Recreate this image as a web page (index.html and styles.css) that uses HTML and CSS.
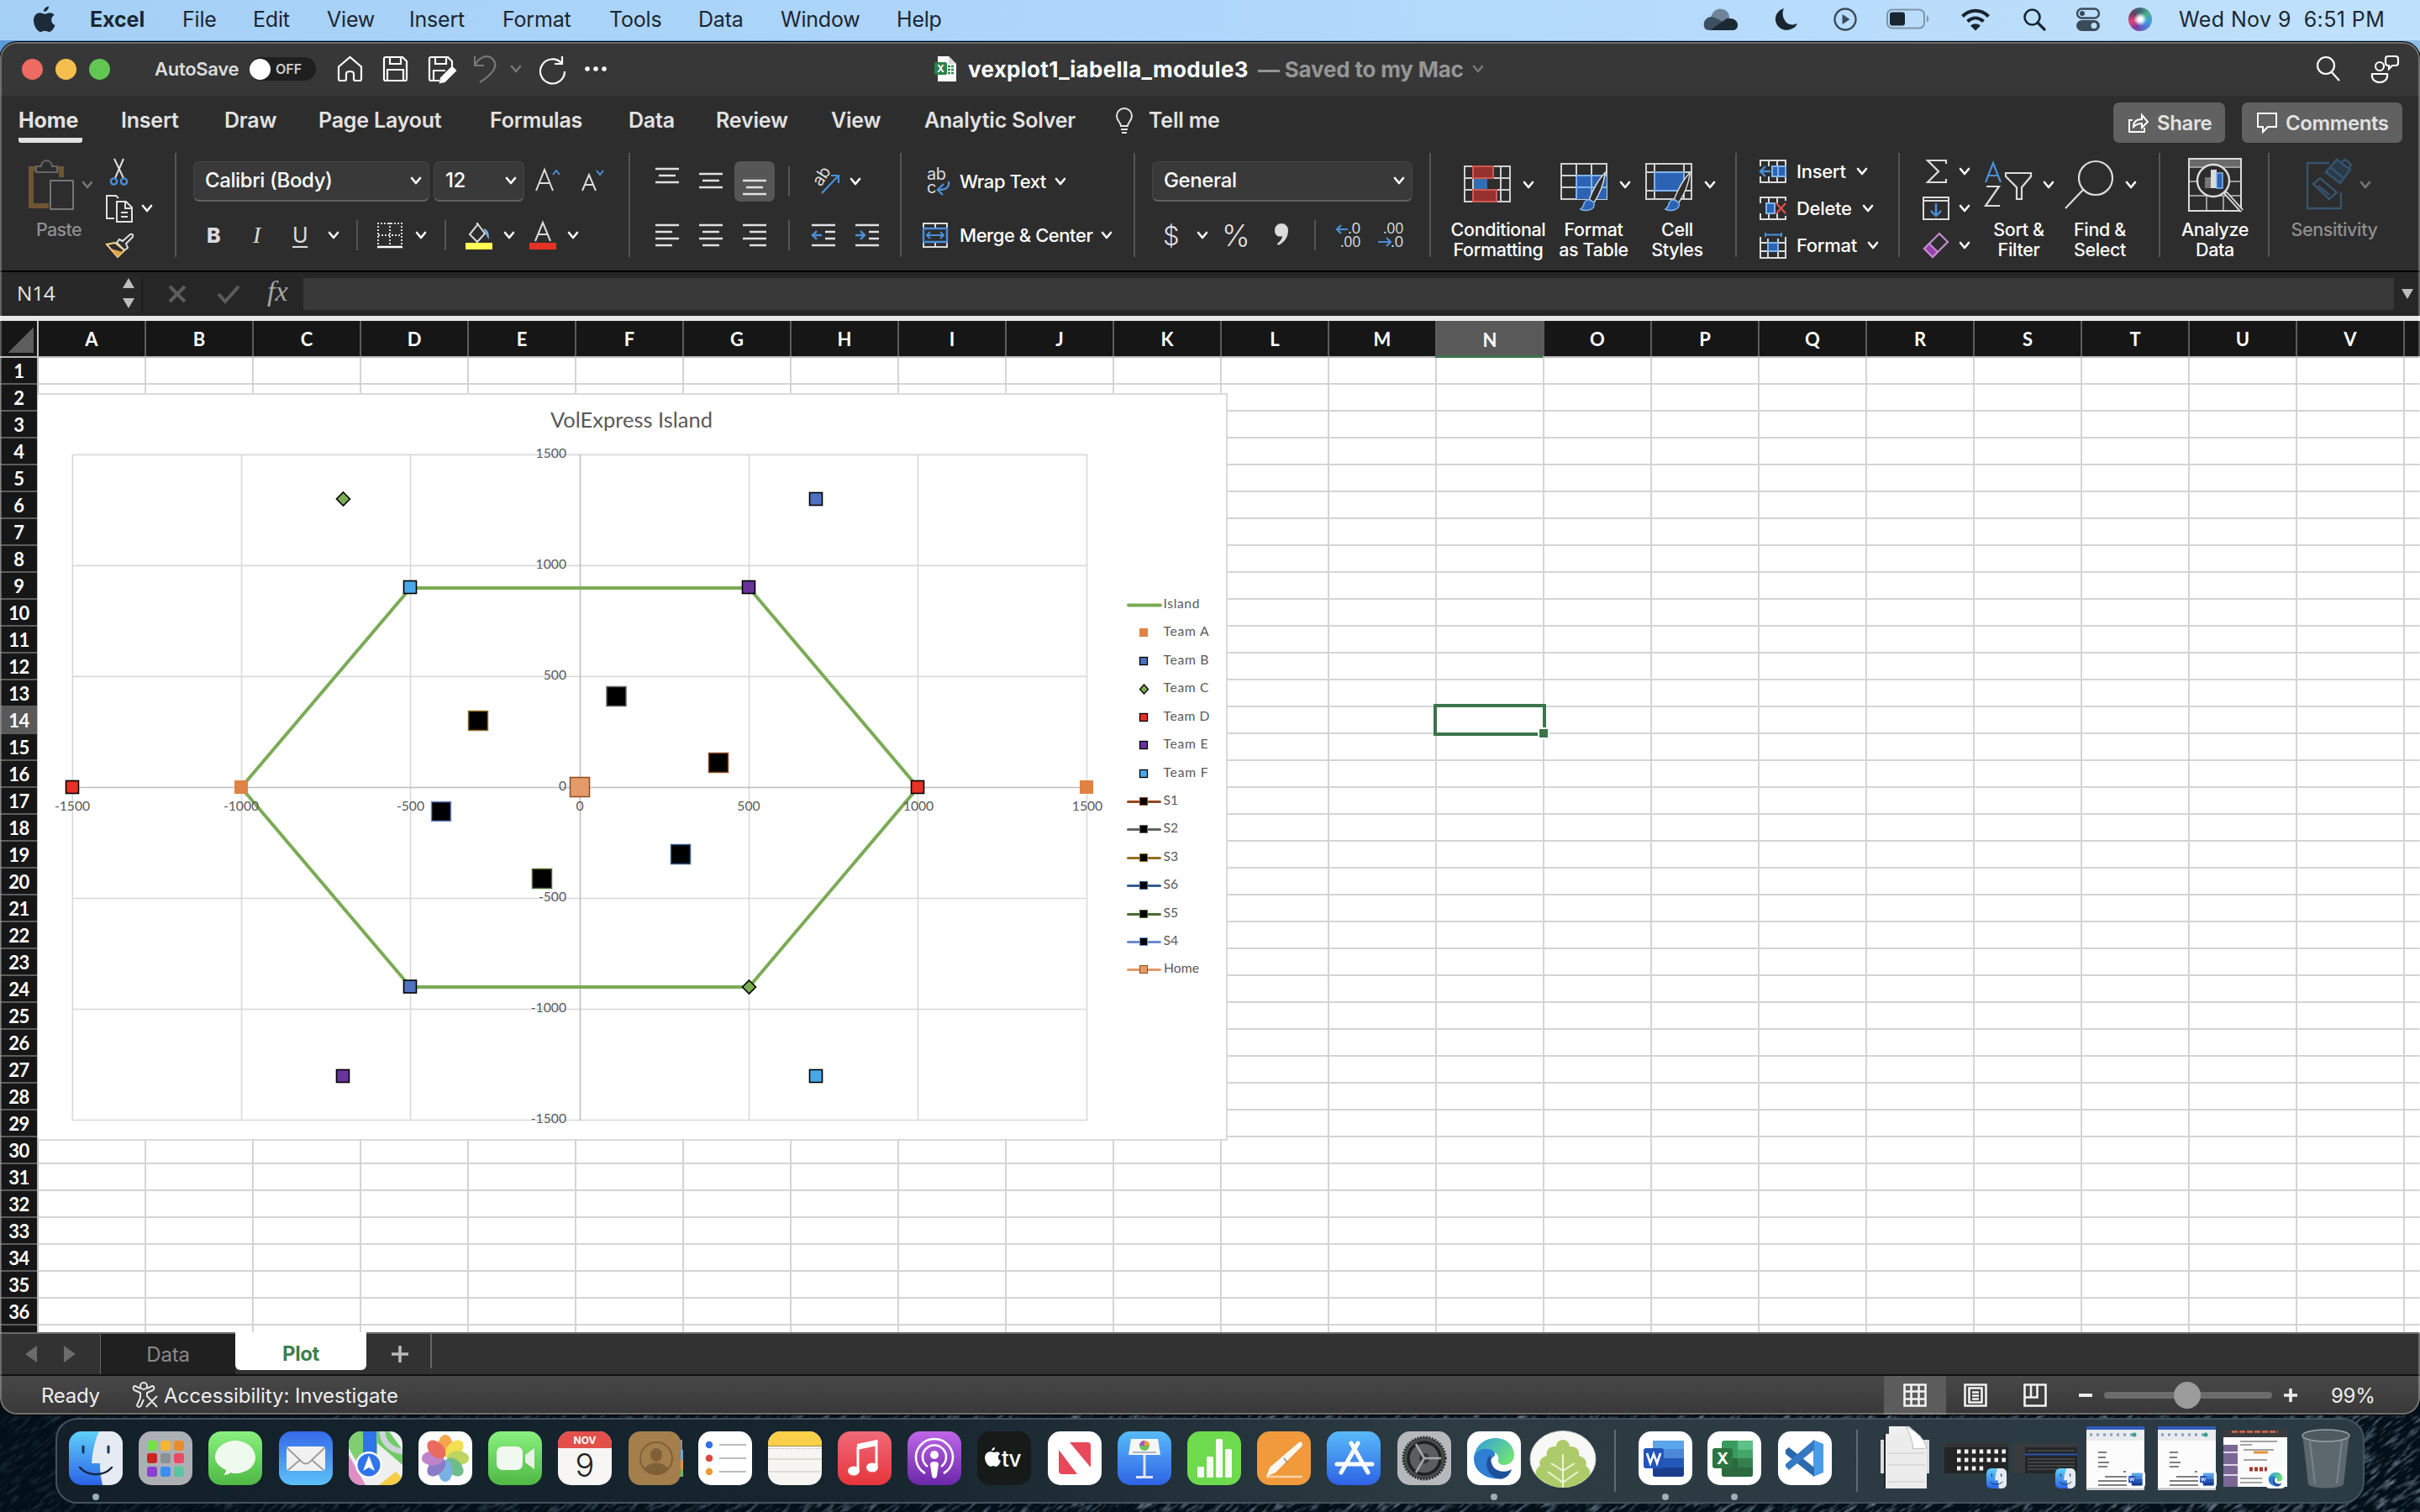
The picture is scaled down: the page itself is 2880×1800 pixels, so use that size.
FILE: index.html
```html
<!DOCTYPE html>
<html lang="en">
<head>
<meta charset="utf-8">
<title>vexplot1_iabella_module3</title>
<link rel="stylesheet" href="styles.css">
</head>
<body>
<svg class="defs" width="0" height="0" aria-hidden="true">
  <symbol id="chev" viewBox="0 0 14 10"><path d="M2 2l5 6 5-6" fill="none" stroke="currentColor" stroke-width="2.6" stroke-linecap="round" stroke-linejoin="round"/></symbol>
  <symbol id="brush" viewBox="0 0 42 72"><path d="M40 2C30 12 20 30 15 44l7 6C30 38 38 20 40 2z" fill="#2d2d2d" stroke="#dcdcdc" stroke-width="2"/><path d="M15 45c-5 0-8 3-9 8-1 5-3 6-5 7 7 4 18 2 21-4 1-3 1-5 0-7z" fill="#2c63b4" stroke="#7fb4ea" stroke-width="2"/></symbol>
  <symbol id="finder" viewBox="0 0 64 64"><defs><linearGradient id="gf" x2="0" y2="1"><stop offset="0" stop-color="#5fd0fa"/><stop offset="1" stop-color="#2b62e8"/></linearGradient></defs><rect width="64" height="64" rx="15" fill="url(#gf)"/><path d="M36 0h13a15 15 0 0 1 15 15v34a15 15 0 0 1-15 15H40c-2-8-3-17-3-26H27C28 24 31 10 36 0z" fill="#e6eaf2"/><path d="M17 18v7M47 18v7" stroke="#1d3350" stroke-width="3" stroke-linecap="round"/><path d="M13 43c10 11 28 11 38 0" fill="none" stroke="#14243c" stroke-width="2.4" stroke-linecap="round"/></symbol>
  <symbol id="word" viewBox="0 0 64 64"><rect width="64" height="64" rx="15" fill="#fff"/><rect x="17" y="11" width="37" height="43" rx="3" fill="#4b88d8"/><path d="M17 11h37v10H17z" fill="#5aa5ec"/><path d="M17 32h37v11H17z" fill="#2458b8"/><path d="M17 43h37v8a3 3 0 0 1-3 3H20a3 3 0 0 1-3-3z" fill="#1c3c8c"/><rect x="6" y="20" width="24" height="24" rx="3" fill="#2354ba"/><path d="M10 26l4 12 4-11 4 11 4-12" fill="none" stroke="#fff" stroke-width="2.6"/></symbol>
  <symbol id="edge" viewBox="0 0 64 64"><defs><linearGradient id="ge" x2="1" y2=".6"><stop offset="0" stop-color="#2f9be0"/><stop offset="1" stop-color="#6fe07a"/></linearGradient></defs><path d="M8 34C8 18 20 8 34 8c14 0 22 10 22 20 0 8-6 12-12 12-5 0-8-3-7-7 1-3-1-8-8-8C17 25 9 31 8 34z" fill="url(#ge)"/><path d="M8 32c1-7 9-12 16-11 6 0 10 4 9 8-4 2-8 9-5 17 3 7 10 11 17 10-17 3-37-5-37-24z" fill="#2f7fd2"/><path d="M28 28c-8 6-6 24 8 28 9 2 15-4 17-11-8 5-18 3-22-3-3-5-3-11-3-14z" fill="#1e4f9c"/></symbol>
</svg>

<header class="menubar">
  <svg class="apple" width="28" height="32" viewBox="0 0 28 32"><path d="M19 .5c.3 3-2.600 6.500-6 6.500C12.600 4 15.500.8 19 .5zM25.500 11c-5 3-4 10 1 12-1.500 4-4 8-7 8-2 0-2.600-1.200-5-1.200S11.400 31 9.600 31C5.500 31 1 23.500 1 17.500 1 11.500 4.800 8.300 8.600 8.300c2.400 0 4.200 1.500 5.800 1.500s3.600-1.600 6.400-1.500c2 .1 3.700 1 4.700 2.700z" fill="#1c2b3a"/></svg>
  <b>Excel</b><span>File</span><span>Edit</span><span>View</span><span>Insert</span><span>Format</span><span>Tools</span><span>Data</span><span>Window</span><span>Help</span>
  <svg width="42" height="28" viewBox="0 0 42 28"><path d="M9 12C11 4 17 0 23 2c6 1 8 6 8 10L18 20z" fill="#6d8499"/><path d="M2 25C-1 20 1 12 9 11c3 0 5 1 7 2l9 5L8 27c-3 0-5-1-6-2z" fill="#3d4f60"/><path d="M8 27l20-14c7-1 13 2 13 8 0 4-3 6-6 6z" fill="#1b2935"/></svg>
  <svg width="30" height="30" viewBox="0 0 30 30"><path d="M12 2C3 5 0 13 3 20s12 10 19 6c3-1 5-4 6-6-6 3-13 1-15-4-3-5-3-10-1-14z" fill="#18242f"/></svg>
  <svg width="30" height="30" viewBox="0 0 30 30"><circle cx="15" cy="15" r="12.500" fill="none" stroke="#3b4b5a" stroke-width="2.400"/><path d="M11.500 9l9 6-9 6z" fill="#3b4b5a"/></svg>
  <svg width="52" height="26" viewBox="0 0 52 26"><rect x="1" y="1.500" width="44" height="22" rx="6" fill="none" stroke="#7f95a8" stroke-width="2"/><rect x="4" y="4.500" width="18" height="16" rx="3" fill="#1a252f"/><path d="M48 8c3 2 3 7 0 9z" fill="#7f95a8"/></svg>
  <svg width="36" height="28" viewBox="0 0 36 28"><g fill="none" stroke="#18242f" stroke-width="4"><path d="M2.500 10.500c9-9 22-9 31 0"/><path d="M8.500 16.500c6-5.500 13-5.500 19 0"/></g><path d="M12 21.500c4-3 8-3 12 0l-6 6z" fill="#18242f"/></svg>
  <svg width="28" height="28" viewBox="0 0 28 28"><circle cx="11.500" cy="11.500" r="9" fill="none" stroke="#18242f" stroke-width="2.600"/><path d="M18 18l8 8" stroke="#18242f" stroke-width="3.200" stroke-linecap="round"/></svg>
  <svg width="30" height="28" viewBox="0 0 30 28"><rect x="2" y="1.500" width="26" height="11" rx="5.500" fill="none" stroke="#3b4b5a" stroke-width="2.400"/><circle cx="8" cy="7" r="3" fill="#3b4b5a"/><rect x="1" y="15" width="28" height="13" rx="6.500" fill="#3b4b5a"/><circle cx="22" cy="21.500" r="3.500" fill="#bfe0fb"/></svg>
  <span class="siri"></span>
  <span class="clock">Wed Nov 9&nbsp; 6:51 PM</span>
</header>

<main class="window">
  <div class="titlebar">
    <i class="light red"></i><i class="light amber"></i><i class="light green"></i>
    <span class="autosave">AutoSave</span>
    <span class="toggle"><i></i>OFF</span>
    <svg width="32" height="32" viewBox="0 0 32 32"><path d="M2 13.500L15.500 2 29 13.500V28q0 2-2 2h-5q-2 0-2-2v-6q0-3-4.500-3T11 22v6q0 2-2 2H4q-2 0-2-2z"/></svg>
    <svg width="32" height="32" viewBox="0 0 32 32"><path d="M4 2h20l5 5v21q0 2-2 2H4q-2 0-2-2V4q0-2 2-2zM9 2v8h13V2M6 30V17h19v13"/></svg>
    <svg width="34" height="32" viewBox="0 0 34 32"><path d="M14 30H4q-2 0-2-2V4q0-2 2-2h20l5 5v6M9 2v8h13V2M7 30V18h14"/><path d="M29 14l4 4-13 13-5 1 1-5z" fill="#fff"/></svg>
    <svg class="dim" width="30" height="34" viewBox="0 0 30 34"><path d="M2 2v11h11M2 13C7 3 17-1 23 5c8 8 1 18-15 28"/></svg>
    <svg class="chev dim" ><use href="#chev"/></svg>
    <svg width="36" height="34" viewBox="0 0 36 34"><path d="M30 2v9h-9M29.500 10.500A14.500 14.500 0 1 0 33 20"/></svg>
    <svg width="28" height="32" viewBox="0 0 28 32"><g fill="#fff" stroke="none"><circle cx="5" cy="16" r="2.800"/><circle cx="15" cy="16" r="2.800"/><circle cx="25" cy="16" r="2.800"/></g></svg>
    <svg class="fileicon" width="28" height="30" viewBox="0 0 28 30"><path d="M4 0h13l9 9v21H4z" fill="#fff" stroke="none"/><path d="M17 0l9 9h-9z" fill="#d9d9d9" stroke="none"/><path d="M16 12h7M16 16h7M16 20h7" stroke="#2f8a4e" stroke-width="2.500" stroke-dasharray="3 1"/><rect y="7" width="15" height="15" rx="2" fill="#2b8049" stroke="none"/><text x="7.500" y="19" text-anchor="middle" class="tiny-x">X</text></svg>
    <span class="doc">vexplot1_iabella_module3</span>
    <span class="saved">— Saved to my Mac</span>
    <svg class="chev dim"><use href="#chev"/></svg>
    <svg width="30" height="32" viewBox="0 0 30 32"><circle cx="12" cy="12" r="10"/><path d="M19 20l9 10"/></svg>
    <svg width="34" height="34" viewBox="0 0 34 34"><circle cx="10" cy="14" r="5"/><path d="M1 23h18c1 6-3 10-9 10S0 29 1 23zM20 2h9a3 3 0 0 1 3 3v5a3 3 0 0 1-3 3h-4l-4 4v-4h-1a3 3 0 0 1-3-3V5a3 3 0 0 1 3-3z"/></svg>
  </div>

  <section class="ribbon">
    <nav class="tabs">
      <b class="active">Home</b><span>Insert</span><span>Draw</span><span>Page Layout</span><span>Formulas</span><span>Data</span><span>Review</span><span>View</span><span>Analytic Solver</span>
      <svg width="22" height="32" viewBox="0 0 22 32"><path d="M7 23c0-4-5-6-5-12a9 9 0 0 1 18 0c0 6-5 8-5 12zM7 27h8M8 31h6" fill="none" stroke="#e4e4e4" stroke-width="2"/></svg>
      <span>Tell me</span>
      <button class="pill share"><svg width="26" height="24" viewBox="0 0 26 24"><path d="M6 9H2v14h18v-5M7 17c0-7 4-9 10-9V3l7 8-7 7v-5c-5 0-7 1-10 4z" fill="none" stroke="#fff" stroke-width="2"/></svg>Share</button>
      <button class="pill"><svg width="26" height="24" viewBox="0 0 26 24"><path d="M2 1h22v16H14l-6 6v-6H2z" fill="none" stroke="#fff" stroke-width="2"/></svg>Comments</button>
    </nav>

    <div class="groups">
      <div class="group g-clip">
        <div class="big paste off"><div class="pic"><svg width="56" height="60" viewBox="0 0 56 60"><path d="M12 11H4v44h21M33 11h7v10" fill="none" stroke="#6f5533" stroke-width="6"/><path d="M10 15V8h6c0-9 13-9 13 0h6v7z" fill="#2d2d2d" stroke="#666" stroke-width="2"/><path d="M27 25h27v34H27z" fill="#2d2d2d" stroke="#757575" stroke-width="2"/></svg><svg class="chev"><use href="#chev"/></svg></div>Paste</div>
        <div class="stack">
          <div><svg width="34" height="34" viewBox="0 0 34 34"><path d="M11 2l11 23M22 2L12 25" stroke="#e0e0e0" stroke-width="2"/><g fill="none" stroke="#4a90d9" stroke-width="2.400"><circle cx="10.500" cy="29" r="3.600"/><circle cx="22.500" cy="29" r="3.600"/></g></svg></div>
          <div><svg width="34" height="34" viewBox="0 0 34 34"><g fill="none" stroke="#e0e0e0" stroke-width="2"><path d="M11 29H2V2h11l3 3"/><path d="M14 9h11l7 7v17H14zM24 9v8h8M19 22h8M19 27h8"/></g></svg><svg class="chev"><use href="#chev"/></svg></div>
          <div><svg width="34" height="32" viewBox="0 0 34 32"><path d="M30 3L21 11l-4-2-3 4 9 9 4-3-2-5 8-8q1-4-3-3z" fill="none" stroke="#e0e0e0" stroke-width="2"/><path d="M12 13L2 15l13 15 8-8z" fill="#2d2d2d" stroke="#f1d487" stroke-width="2"/><path d="M7 20l14 4-6 6z" fill="#e0a34a"/></svg></div>
        </div>
      </div>

      <div class="group two g-font">
        <div class="line">
          <span class="combo">Calibri (Body)<svg class="chev"><use href="#chev"/></svg></span>
          <span class="combo">12<svg class="chev"><use href="#chev"/></svg></span>
          <svg class="grow" width="32" height="34" viewBox="0 0 32 34"><path d="M2 32L12 7l10 25M6 23h12" fill="none" stroke="#dcdcdc" stroke-width="2"/><path d="M22 13l4-5 4 5" fill="none" stroke="#4a90d9" stroke-width="2"/></svg>
          <svg class="shrink" width="32" height="34" viewBox="0 0 32 34"><path d="M2 32l8-19 8 19M5 25h10" fill="none" stroke="#dcdcdc" stroke-width="2"/><path d="M19 8l4 5 4-5" fill="none" stroke="#4a90d9" stroke-width="2"/></svg>
        </div>
        <div class="line">
          <b class="fmt">B</b><i class="fmt it">I</i><u class="fmt un">U</u><svg class="chev"><use href="#chev"/></svg><i class="sep"></i>
          <svg width="30" height="32" viewBox="0 0 30 32"><path d="M0 2h30M1 16h28M1 1v27M15 1v27M29 1v27" stroke="#dcdcdc" stroke-width="2" stroke-dasharray="2 2"/><path d="M0 30h30" stroke="#fff" stroke-width="2.500"/></svg><svg class="chev"><use href="#chev"/></svg><i class="sep"></i>
          <svg width="32" height="34" viewBox="0 0 32 34"><path d="M14 3l9 12-9 10-9-9 9-11V2" fill="none" stroke="#dcdcdc" stroke-width="2"/><path d="M21 9c6 1 7 5 7 13-3-3-3-6-7-13z" fill="#78a9dc"/><path d="M0 26h32v8H0z" fill="#ffff54"/></svg><svg class="chev"><use href="#chev"/></svg>
          <svg width="32" height="34" viewBox="0 0 32 34"><path d="M7 24l9-22 9 22M10 16h12" fill="none" stroke="#dcdcdc" stroke-width="2"/><path d="M0 26h32v8H0z" fill="#e63225"/></svg><svg class="chev"><use href="#chev"/></svg>
        </div>
      </div>

      <div class="group two g-align">
        <div class="line">
          <svg width="28" height="32" viewBox="0 0 28 32"><path d="M0 1h28M4 9h20M0 17h28"/></svg>
          <svg width="28" height="32" viewBox="0 0 28 32"><path d="M0 7h28M4 15h20M0 23h28"/></svg>
          <span class="sel"><svg width="28" height="32" viewBox="0 0 28 32"><path d="M0 15h28M4 23h20M0 31h28"/></svg></span>
          <i class="sep"></i>
          <svg width="34" height="32" viewBox="0 0 34 32"><text x="0" y="0" transform="translate(11 23) rotate(-57)" class="ab">ab</text><path d="M12 30L32 9M23 9h9v9" style="stroke:#4a90d9;stroke-width:2.2"/></svg><svg class="chev"><use href="#chev"/></svg>
        </div>
        <div class="line">
          <svg width="28" height="28" viewBox="0 0 28 28"><path d="M0 2h28M0 10h20M0 18h28M0 26h20"/></svg>
          <svg width="28" height="28" viewBox="0 0 28 28"><path d="M0 2h28M4 10h20M0 18h28M4 26h20"/></svg>
          <span class="sel plain"><svg width="28" height="28" viewBox="0 0 28 28"><path d="M0 2h28M8 10h20M0 18h28M8 26h20"/></svg></span>
          <i class="sep"></i>
          <svg width="28" height="28" viewBox="0 0 28 28"><path d="M0 2h28M16 10h12M16 18h12M0 26h28"/><path d="M12 14H1M6 9l-5 5 5 5" style="stroke:#4a90d9;stroke-width:2.4"/></svg>
          <svg width="28" height="28" viewBox="0 0 28 28"><path d="M0 2h28M16 10h12M16 18h12M0 26h28"/><path d="M0 14h11M6 9l5 5-5 5" style="stroke:#4a90d9;stroke-width:2.4"/></svg>
        </div>
      </div>

      <div class="group two g-wrap">
        <div class="line"><svg width="30" height="34" viewBox="0 0 30 34"><text x="4" y="15" class="ab">ab</text><text x="4" y="31" class="ab">c</text><path d="M30 17c1 7-3 10-12 10M24 20l-7 7 6 6" fill="none" stroke="#4a90d9" stroke-width="2.400"/></svg><span>Wrap Text</span><svg class="chev"><use href="#chev"/></svg></div>
        <div class="line"><svg width="30" height="32" viewBox="0 0 30 32"><path d="M0 2h28v28H0zM14 2v6M14 24v6" fill="none" stroke="#dcdcdc" stroke-width="2"/><path d="M0 8h28v16H0z" fill="#2d2d2d" stroke="#4a90d9" stroke-width="2.400"/><path d="M4 16h20M8 12l-4 4 4 4M20 12l4 4-4 4" fill="none" stroke="#4a90d9" stroke-width="2"/></svg><span>Merge &amp; Center</span><svg class="chev"><use href="#chev"/></svg></div>
      </div>

      <div class="group two g-num">
        <div class="line"><span class="combo">General<svg class="chev"><use href="#chev"/></svg></span></div>
        <div class="line"><span class="sym">$</span><svg class="chev"><use href="#chev"/></svg><span class="sym pc">%</span><svg width="18" height="26" viewBox="0 0 18 26"><path d="M1 7a8 8 0 0 1 16 0c0 9-5 15-12 18l-1-2c4-3 6-6 6-9-5 2-9-1-9-7z" fill="#dcdcdc"/></svg><i class="sep"></i>
          <svg width="32" height="34" viewBox="0 0 32 34"><text x="15" y="15" class="dec" textLength="15" lengthAdjust="spacingAndGlyphs">.0</text><text x="6" y="31" class="dec" textLength="24" lengthAdjust="spacingAndGlyphs">.00</text><path d="M15 10H2M7 5l-5 5 5 5" fill="none" stroke="#4a90d9" stroke-width="2.200"/></svg>
          <svg width="32" height="34" viewBox="0 0 32 34"><text x="6" y="15" class="dec" textLength="24" lengthAdjust="spacingAndGlyphs">.00</text><text x="15" y="31" class="dec" textLength="15" lengthAdjust="spacingAndGlyphs">.0</text><path d="M0 25h15M10 20l5 5-5 5" fill="none" stroke="#4a90d9" stroke-width="2.200"/></svg>
        </div>
      </div>

      <div class="group g-style">
        <div class="big cf"><div class="pic"><svg width="58" height="46" viewBox="0 0 58 46"><path d="M1 1h54v42H1zM1 15h54M1 29h54M11 1v42M44 1v42" fill="none" stroke="#d0d0d0" stroke-width="2"/><path d="M11 1h24v14H11zM11 29h28v14H11z" fill="#98302f" stroke="#cf5a55" stroke-width="2"/><path d="M12 16h16v12H12z" fill="#2f6fb5"/></svg><svg class="chev"><use href="#chev"/></svg></div>Conditional<br>Formatting</div>
        <div class="big ft"><div class="pic"><svg width="60" height="56" viewBox="0 0 60 56"><path d="M1 3h54v42H1zM1 17h54M1 31h54M19 3v42M37 3v42" fill="none" stroke="#d0d0d0" stroke-width="2"/><path d="M19 17h36v28H19z" fill="#2c63b4"/><path d="M19 17h36M19 31h36M19 17v28M37 17v28" stroke="#7fb4ea" stroke-width="2"/><use href="#brush" x="13" y="12" width="52" height="54" y2="0"/></svg><svg class="chev"><use href="#chev"/></svg></div>Format<br>as Table</div>
        <div class="big cs"><div class="pic"><svg width="60" height="56" viewBox="0 0 60 56"><path d="M1 3h54v42H1zM1 13h54M1 35h54M11 3v42M46 3v42" fill="none" stroke="#d0d0d0" stroke-width="2"/><path d="M11 13h35v22H11z" fill="#2c63b4" stroke="#7fb4ea" stroke-width="2"/><use href="#brush" x="13" y="12" width="52" height="54"/></svg><svg class="chev"><use href="#chev"/></svg></div>Cell<br>Styles</div>
      </div>

      <div class="group g-cells">
        <div class="row3"><svg width="32" height="30" viewBox="0 0 32 30"><path d="M1 9V2h30v26H1v-7M11 2v7M21 2v7M11 21v7M21 21v7" fill="none" stroke="#dcdcdc" stroke-width="2"/><path d="M15 9h16v12H15zM22 9v12" fill="#2c63b4" stroke="#7fb4ea" stroke-width="2"/><path d="M13 15H1M7 9l-6 6 6 6" fill="none" stroke="#4a90d9" stroke-width="2.400"/></svg><span>Insert</span><svg class="chev"><use href="#chev"/></svg></div>
        <div class="row3"><svg width="32" height="30" viewBox="0 0 32 30"><path d="M1 9V2h30v4M1 21v7h30v-4M11 2v7M21 2v7M11 21v7M21 21v7" fill="none" stroke="#dcdcdc" stroke-width="2"/><path d="M8 9h10v12H8z" fill="#2c63b4" stroke="#7fb4ea" stroke-width="2"/><path d="M20 9l11 12M31 9L20 21" fill="none" stroke="#dd4f49" stroke-width="2.400"/></svg><span>Delete</span><svg class="chev"><use href="#chev"/></svg></div>
        <div class="row3"><svg width="32" height="32" viewBox="0 0 32 32"><path d="M1 6v25h30V6M1 13h30M1 23h30M10 8v23M22 8v23" fill="none" stroke="#dcdcdc" stroke-width="2"/><path d="M10 13h12v10H10z" fill="#2c63b4" stroke="#7fb4ea" stroke-width="2"/><path d="M7 1v5M26 1v5M7 3.500h19" stroke="#4a90d9" stroke-width="2"/></svg><span>Format</span><svg class="chev"><use href="#chev"/></svg></div>
      </div>

      <div class="group g-edit">
        <div class="stack">
          <div><svg width="32" height="30" viewBox="0 0 32 30"><path d="M28 6V2H6l13 13L6 28h22v-4" fill="none" stroke="#dcdcdc" stroke-width="2.200"/></svg><svg class="chev"><use href="#chev"/></svg></div>
          <div><svg width="32" height="30" viewBox="0 0 32 30"><path d="M1 2h30v26H1zM1 6h30" fill="none" stroke="#dcdcdc" stroke-width="2"/><path d="M16 9v15M10 18l6 6 6-6" fill="none" stroke="#4a90d9" stroke-width="2.400"/></svg><svg class="chev"><use href="#chev"/></svg></div>
          <div><svg width="32" height="32" viewBox="0 0 32 32"><path d="M2 20L20 2l10 10-18 18z" fill="none" stroke="#c48bd0" stroke-width="2.200"/><path d="M2 20l6-6 10 10-6 6z" fill="#9a3fae" stroke="#c48bd0" stroke-width="2"/></svg><svg class="chev"><use href="#chev"/></svg></div>
        </div>
        <div class="big sort"><div class="pic"><svg width="58" height="56" viewBox="0 0 58 56"><path d="M2 25L11 2l9 23M5 17h12" fill="none" stroke="#4a90d9" stroke-width="2.200"/><path d="M3 30h15L2 53h17M26 14h30v4L45 31v14h-6V31L26 18z" fill="none" stroke="#dcdcdc" stroke-width="2.200"/></svg><svg class="chev"><use href="#chev"/></svg></div>Sort &amp;<br>Filter</div>
        <div class="big find"><div class="pic"><svg width="60" height="60" viewBox="0 0 60 60"><circle cx="37" cy="22" r="20" fill="none" stroke="#dcdcdc" stroke-width="2.200"/><path d="M22 36L1 58" stroke="#dcdcdc" stroke-width="2.200"/></svg><svg class="chev"><use href="#chev"/></svg></div>Find &amp;<br>Select</div>
      </div>

      <div class="group g-an"><div class="big an"><div class="pic"><svg width="66" height="64" viewBox="0 0 66 64"><path d="M1 1h62v62H1zM1 11h62M1 28h62M1 45h62M22 45v18M42 45v18" fill="none" stroke="#9a9a9a" stroke-width="2"/><path d="M2 2h60v8H2z" fill="#6a6a6a"/><path d="M1 1h62v62H1z" fill="none" stroke="#dcdcdc" stroke-width="2"/><circle cx="30" cy="27" r="19" fill="#2d2d2d" stroke="#dcdcdc" stroke-width="2.400"/><path d="M44 41l20 22" stroke="#dcdcdc" stroke-width="5"/><path d="M45 42l19 21" stroke="#2d2d2d" stroke-width="1.500"/><path d="M20 23h7v13h-7z" fill="#777"/><path d="M27 14h7v22h-7z" fill="#dcdcdc"/><path d="M34 18h7v18h-7z" fill="#2c63b4" stroke="#7fb4ea" stroke-width="1.500"/></svg></div>Analyze<br>Data</div></div>
      <div class="group g-sens"><div class="big sens off"><div class="pic"><svg width="56" height="62" viewBox="0 0 56 62"><g fill="none" stroke="#36546f" stroke-width="2.400"><path d="M28 5H2v54h40V40"/><path d="M9 30l8-7 20 17-9 8z"/><path d="M15 32l13 11"/><path d="M24 16l13-15 16 12-12 16z" fill="#2a3a49"/><path d="M29 10l16 13M43 4l4-3 7 6-3 5"/></g></svg><svg class="chev"><use href="#chev"/></svg></div>Sensitivity</div></div>
    </div>
  </section>

  <div class="formula">
    <span class="name">N14<svg width="14" height="36" viewBox="0 0 14 36"><path d="M7 0l7 12H0zM7 36L0 24h14z" fill="#bdbdbd"/></svg></span>
    <svg width="22" height="22" viewBox="0 0 22 22"><path d="M2 2l18 18M20 2L2 20" stroke="#5c5c5c" stroke-width="4"/></svg>
    <svg width="28" height="22" viewBox="0 0 28 22"><path d="M2 11l8 9L26 2" fill="none" stroke="#5c5c5c" stroke-width="4"/></svg>
    <span class="fx">fx</span>
    <span class="field"></span>
    <svg width="14" height="12" viewBox="0 0 14 12"><path d="M0 0h14L7 12z" fill="#bdbdbd"/></svg>
  </div>

  <section class="sheet">
    <div class="cols"><span class="corner"></span><span>A</span><span>B</span><span>C</span><span>D</span><span>E</span><span>F</span><span>G</span><span>H</span><span>I</span><span>J</span><span>K</span><span>L</span><span>M</span><span class="hot">N</span><span>O</span><span>P</span><span>Q</span><span>R</span><span>S</span><span>T</span><span>U</span><span>V</span><span></span></div>
    <div class="body">
      <div class="rows"><span>1</span><span>2</span><span>3</span><span>4</span><span>5</span><span>6</span><span>7</span><span>8</span><span>9</span><span>10</span><span>11</span><span>12</span><span>13</span><span class="hot">14</span><span>15</span><span>16</span><span>17</span><span>18</span><span>19</span><span>20</span><span>21</span><span>22</span><span>23</span><span>24</span><span>25</span><span>26</span><span>27</span><span>28</span><span>29</span><span>30</span><span>31</span><span>32</span><span>33</span><span>34</span><span>35</span><span>36</span></div>
      <div class="cells">
        <div class="cursor"><i></i></div>
        <svg class="chart" width="1417" height="890" viewBox="45 468 1417 890">
          <rect x="44" y="469" width="1416" height="888" fill="#fff" stroke="#d9d9d9" stroke-width="2"/>
          <path d="M86 541.400H1293.500M86 673.400H1293.500M86 805.400H1293.500M86 1069.500H1293.500M86 1201.500H1293.500M86 1333.500H1293.500M86.300 541V1334M287.500 541V1334M488.600 541V1334M891.500 541V1334M1092.500 541V1334M1293.500 541V1334" stroke="#d9d9d9" stroke-width="1.600"/>
          <path d="M86 937.500H1293.500M690.500 541V1334" stroke="#bfbfbf" stroke-width="1.600"/>
          <text x="655" y="509" class="ctitle" textLength="193" lengthAdjust="spacingAndGlyphs">VolExpress Island</text>
          <path d="M287 937.500L488.500 700H891.500L1092.500 937.500L891.500 1175H488.500z" fill="none" stroke="#7aab55" stroke-width="4" stroke-linejoin="round"/>
          <g class="ax" text-anchor="end"><text x="674" y="545">1500</text><text x="674" y="677">1000</text><text x="674" y="809">500</text><text x="674" y="941">0</text><text x="674" y="1073">-500</text><text x="674" y="1205">-1000</text><text x="674" y="1337">-1500</text></g>
          <g class="ax" text-anchor="middle"><text x="86" y="965">-1500</text><text x="287" y="965">-1000</text><text x="488.500" y="965">-500</text><text x="690" y="965">0</text><text x="891" y="965">500</text><text x="1093" y="965">1000</text><text x="1294" y="965">1500</text></g>
          <g fill="#de8344"><rect x="279" y="929" width="16" height="16"/><rect x="1285" y="929" width="16" height="16"/></g>
          <g stroke="#000" stroke-width="1.600">
            <g fill="#4e72be"><rect x="480.500" y="1167" width="15" height="15"/><rect x="963.500" y="586.500" width="15" height="15"/></g>
            <g fill="#7aab55"><path d="M408.500 586l8 8-8 8-8-8zM891.500 1167l8 8-8 8-8-8z"/></g>
            <g fill="#e63225"><rect x="78.500" y="929.500" width="15" height="15"/><rect x="1084.500" y="929.500" width="15" height="15"/></g>
            <g fill="#68349a"><rect x="883.500" y="691.500" width="15" height="15"/><rect x="400.500" y="1273.500" width="15" height="15"/></g>
            <g fill="#4aa8e8"><rect x="480.500" y="691.500" width="15" height="15"/><rect x="963.500" y="1273.500" width="15" height="15"/></g>
          </g>
          <g fill="#000" stroke-width="1.500">
            <rect x="843.500" y="896.500" width="23" height="23" stroke="#8f4a22"/><rect x="722" y="817.500" width="23" height="23" stroke="#636363"/><rect x="557.500" y="846.500" width="23" height="23" stroke="#92701f"/>
            <rect x="513.500" y="954.500" width="23" height="23" stroke="#6d8bd0"/><rect x="798.500" y="1005.500" width="23" height="23" stroke="#335f93"/><rect x="633.500" y="1034.500" width="23" height="23" stroke="#4c6b33"/>
            <rect x="678.500" y="925.500" width="23" height="23" fill="#e59b69" stroke="#8f4a22"/>
          </g>
          <path d="M1343 720.500h38" stroke="#7aab55" stroke-width="4" stroke-linecap="round"/>
          <g stroke-width="3" stroke-linecap="round"><path d="M1342.500 954.500h38" stroke="#93481f"/><path d="M1342.500 987.500h38" stroke="#636363"/><path d="M1342.500 1021.500h38" stroke="#92701f"/><path d="M1342.500 1054.500h38" stroke="#335f93"/><path d="M1342.500 1088.500h38" stroke="#4c6b33"/><path d="M1342.500 1121.500h38" stroke="#6d8bd0"/><path d="M1342.500 1154.500h38" stroke="#e59b69"/></g>
          <g stroke="#000" stroke-width="1.300"><rect x="1356" y="748" width="10" height="10" fill="#de8344" stroke="none"/><rect x="1356.500" y="782.500" width="9" height="9" fill="#4e72be"/><path d="M1361.500 815l5 5.500-5 5.500-5-5.500z" fill="#7aab55"/><rect x="1356.500" y="849.500" width="9" height="9" fill="#e63225"/><rect x="1356.500" y="882.500" width="9" height="9" fill="#68349a"/><rect x="1356.500" y="916.500" width="9" height="9" fill="#4aa8e8"/></g>
          <g fill="#000" stroke-width="1"><rect x="1356.500" y="949.500" width="9" height="9" stroke="#93481f"/><rect x="1356.500" y="982.500" width="9" height="9" stroke="#636363"/><rect x="1356.500" y="1016.500" width="9" height="9" stroke="#92701f"/><rect x="1356.500" y="1049.500" width="9" height="9" stroke="#335f93"/><rect x="1356.500" y="1083.500" width="9" height="9" stroke="#4c6b33"/><rect x="1356.500" y="1116.500" width="9" height="9" stroke="#6d8bd0"/><rect x="1356.500" y="1149.500" width="9" height="9" fill="#e59b69" stroke="#8f4a22"/></g>
          <g class="ax"><text x="1384.500" y="723.500" textLength="43">Island</text><text x="1384.500" y="757" textLength="54">Team A</text><text x="1384.500" y="791" textLength="54">Team B</text><text x="1384.500" y="824" textLength="54">Team C</text><text x="1384.500" y="858" textLength="55">Team D</text><text x="1384.500" y="891" textLength="53">Team E</text><text x="1384.500" y="925" textLength="53">Team F</text><text x="1384.500" y="958">S1</text><text x="1384.500" y="991">S2</text><text x="1384.500" y="1025">S3</text><text x="1384.500" y="1058">S6</text><text x="1384.500" y="1092">S5</text><text x="1384.500" y="1125">S4</text><text x="1385" y="1158" textLength="42">Home</text></g>
        </svg>
      </div>
    </div>
  </section>

  <div class="sheetbar">
    <span class="nav"><svg width="62" height="20" viewBox="0 0 62 20"><path d="M14 0v20L0 10zM46 0v20l14-10z" fill="#6b6b6b"/></svg></span>
    <span class="tab">Data</span><span class="tab on">Plot</span>
    <span class="add"><svg width="20" height="20" viewBox="0 0 20 20"><path d="M10 0v20M0 10h20" stroke="#b9b9b9" stroke-width="3.600"/></svg></span>
  </div>
  <footer class="status">
    <span>Ready</span>
    <svg width="34" height="32" viewBox="0 0 34 32"><g fill="none" stroke="#e6e6e6" stroke-width="2"><circle cx="14" cy="5" r="4"/><path d="M10 8L4 5c-3 0-3 4-1 5l7 3v6L6 28c1 3 4 2 5 0l3-7M18 8l6-3c3 0 3 4 1 5l-7 3v5M18 17l12 13M30 17L17 30"/></g></svg>
    <span class="acc">Accessibility: Investigate</span>
    <i class="views">
      <b><svg width="28" height="28" viewBox="0 0 28 28"><path d="M1.500 1.500h25v25h-25zM9.500 1v26M18.500 1v26M1 9.500h26M1 18.500h26"/></svg></b>
      <b><svg width="28" height="28" viewBox="0 0 28 28"><path d="M1.500 1.500h25v25h-25zM6.500 5.500h15v17h-15zM10 10.500h8M10 14.500h8M10 18.500h8"/></svg></b>
      <b><svg width="28" height="28" viewBox="0 0 28 28"><path d="M1.500 1.500h25v25h-25zM1.500 16.500h15V1.500M9 1.500v15"/></svg></b>
    </i>
    <svg width="16" height="16" viewBox="0 0 16 16"><path d="M0 8h16" stroke="#eee" stroke-width="4"/></svg>
    <span class="slider"><i></i></span>
    <svg width="16" height="16" viewBox="0 0 16 16"><path d="M0 8h16M8 0v16" stroke="#eee" stroke-width="3.600"/></svg>
    <span>99%</span>
  </footer>
</main>

<footer class="desk">
  <svg class="rock" width="2880" height="118"><filter id="n" x="0" y="0" width="1" height="1"><feTurbulence type="fractalNoise" baseFrequency=".05 .22" numOctaves="4" seed="6"/><feColorMatrix values="0 0 0 0 .45  0 0 0 0 .58  0 0 0 0 .66  2.600 0 0 0 -1.250"/></filter><g transform="rotate(-38 1440 59)"><rect x="-200" y="-1100" width="3300" height="2300" filter="url(#n)"/></g></svg>
  <div class="dock">
    <svg viewBox="0 0 64 64"><use href="#finder"/></svg>
    <svg viewBox="0 0 64 64"><rect width="64" height="64" rx="15" fill="#acb0b5"/><g><rect x="10" y="11" width="12" height="12" rx="3" fill="#74e04f"/><rect x="26" y="11" width="12" height="12" rx="3" fill="#f3b733"/><rect x="42" y="11" width="12" height="12" rx="3" fill="#e98d2c"/><rect x="10" y="26" width="12" height="12" rx="3" fill="#c8261f"/><rect x="26" y="26" width="12" height="12" rx="3" fill="#8b9094"/><rect x="42" y="26" width="12" height="12" rx="3" fill="#ea4a63"/><rect x="10" y="42" width="12" height="12" rx="3" fill="#8c3fd0"/><rect x="26" y="42" width="12" height="12" rx="3" fill="#3d8df2"/><rect x="42" y="42" width="12" height="12" rx="3" fill="#58c6a0"/></g></svg>
    <svg viewBox="0 0 64 64"><defs><linearGradient id="gg" x2="0" y2="1"><stop offset="0" stop-color="#88f07f"/><stop offset="1" stop-color="#4fb944"/></linearGradient><linearGradient id="gb" x2="0" y2="1"><stop offset="0" stop-color="#356ae8"/><stop offset="1" stop-color="#5cc1f8"/></linearGradient></defs><rect width="64" height="64" rx="15" fill="url(#gg)"/><path d="M32 11c13 0 24 9 24 20S45 50 32 50c-2 0-4 0-5-1-3 2-6 3-9 3 2-2 3-4 3-6-8-4-13-9-13-15 0-11 11-20 24-20z" fill="#effaee"/></svg>
    <svg viewBox="0 0 64 64"><rect width="64" height="64" rx="15" fill="url(#gb)"/><rect x="9" y="18" width="46" height="29" rx="4" fill="#f1f1f1"/><path d="M10 20l18 17q4 3 8 0l18-17M11 46l14-12M53 46L39 34" fill="none" stroke="#9b9b9b" stroke-width="1.800"/></svg>
    <svg viewBox="0 0 64 64"><clipPath id="mc"><rect width="64" height="64" rx="15"/></clipPath><g clip-path="url(#mc)"><path d="M0 0h64v64H0z" fill="#efefef"/><path d="M0 0h34v44H14L0 20z" fill="#7fcf72"/><path d="M34 14l30 26v-18L48 0H34z" fill="#6fcb66"/><path d="M0 28l20 36H0z" fill="#dd8fc4"/><path d="M36 64l20-16 8 8v8z" fill="#f6cd46"/><path d="M40 0c0 12 9 22 24 24" fill="none" stroke="#cfd4da" stroke-width="7"/><path d="M17 0h16v36H17z" fill="#2f74ea"/><circle cx="24" cy="40" r="16" fill="#fff"/><circle cx="24" cy="40" r="13.500" fill="#2f74ea"/><path d="M24 29l7 18-7-4-7 4z" fill="#fff"/></g></svg>
    <svg viewBox="0 0 64 64"><rect width="64" height="64" rx="15" fill="#fcfcfc"/><g opacity=".88"><ellipse cx="32" cy="17" rx="8.500" ry="13" fill="#f39a33"/><ellipse cx="32" cy="17" rx="8.500" ry="13" fill="#f1dc3c" transform="rotate(45 32 32)"/><ellipse cx="32" cy="17" rx="8.500" ry="13" fill="#b3d04b" transform="rotate(90 32 32)"/><ellipse cx="32" cy="17" rx="8.500" ry="13" fill="#5cb37a" transform="rotate(135 32 32)"/><ellipse cx="32" cy="17" rx="8.500" ry="13" fill="#66a8e0" transform="rotate(180 32 32)"/><ellipse cx="32" cy="17" rx="8.500" ry="13" fill="#7d6bc0" transform="rotate(225 32 32)"/><ellipse cx="32" cy="17" rx="8.500" ry="13" fill="#b673c4" transform="rotate(270 32 32)"/><ellipse cx="32" cy="17" rx="8.500" ry="13" fill="#e8564a" transform="rotate(315 32 32)"/></g></svg>
    <svg viewBox="0 0 64 64"><rect width="64" height="64" rx="15" fill="url(#gg)"/><rect x="10" y="18" width="31" height="28" rx="7" fill="#f1f8f0"/><path d="M44 28l11-8v25l-11-8z" fill="#e6f3e4"/></svg>
    <svg viewBox="0 0 64 64"><rect width="64" height="64" rx="15" fill="#f7f6f4"/><path d="M0 20v-5A15 15 0 0 1 15 0h34a15 15 0 0 1 15 15v5z" fill="#e2504a"/><text x="32" y="15" text-anchor="middle" class="nov">NOV</text><text x="32" y="54" text-anchor="middle" class="nine">9</text></svg>
    <svg viewBox="0 0 64 64"><path d="M58 10h6v12h-6z" fill="#8d8d8d"/><path d="M58 22h7v12h-7z" fill="#5dabe0"/><path d="M58 34h7v12h-7z" fill="#e6923c"/><path d="M58 46h7v8h-7z" fill="#5fc05a"/><rect width="62" height="64" rx="14" fill="#a47f4c"/><circle cx="33" cy="32" r="19" fill="none" stroke="#7f6038" stroke-width="2"/><ellipse cx="33" cy="28" rx="7" ry="8" fill="#7f6038"/><path d="M19 45c4-10 24-10 28 0-8 9-20 9-28 0z" fill="#7f6038"/></svg>
    <svg viewBox="0 0 64 64"><rect width="64" height="64" rx="15" fill="#fff"/><path d="M25 16h32M25 32h32M25 48h32" stroke="#bcbcbc" stroke-width="2"/><g stroke="#fff" stroke-width="1.500"><circle cx="13" cy="16" r="5" fill="#2f72e8"/><circle cx="13" cy="32" r="5" fill="#e0463c"/><circle cx="13" cy="48" r="5" fill="#ec9a32"/></g></svg>
    <svg viewBox="0 0 64 64"><rect width="64" height="64" rx="15" fill="#f6f5f1"/><path d="M0 17v-2A15 15 0 0 1 15 0h34a15 15 0 0 1 15 15v2z" fill="#f9d048"/><path d="M0 17.500h64" stroke="#a08f57"/><path d="M0 20.500h64" stroke="#bbb" stroke-dasharray="1.500 1.500"/><path d="M0 33h64M0 48h64" stroke="#d6d4ce" stroke-width="1.500"/></svg>
    <svg viewBox="0 0 64 64"><defs><linearGradient id="gr" x2="0" y2="1"><stop offset="0" stop-color="#ef6a78"/><stop offset="1" stop-color="#e6353b"/></linearGradient><linearGradient id="gp" x2="0" y2="1"><stop offset="0" stop-color="#bf66e8"/><stop offset="1" stop-color="#6c27a9"/></linearGradient></defs><rect width="64" height="64" rx="15" fill="url(#gr)"/><path d="M24 18l22-6v30" fill="none" stroke="#fff" stroke-width="3"/><path d="M23 15l24-5v7l-24 5z" fill="#fff"/><path d="M24 18v28" stroke="#fff" stroke-width="3"/><ellipse cx="19" cy="47" rx="7" ry="5.500" fill="#fff"/><ellipse cx="41" cy="43" rx="7" ry="5.500" fill="#fff"/></svg>
    <svg viewBox="0 0 64 64"><rect width="64" height="64" rx="15" fill="url(#gp)"/><g fill="none" stroke="#fff" stroke-width="2.600"><path d="M21 50a22 22 0 1 1 22 0"/><path d="M24 42a14 14 0 1 1 16 0"/></g><circle cx="32" cy="28" r="5" fill="#fff"/><path d="M27 39c0-4 10-4 10 0l-2 14c-1 4-5 4-6 0z" fill="#fff"/></svg>
    <svg viewBox="0 0 64 64"><rect width="64" height="64" rx="15" fill="#161b1a"/><path d="M21 19c0 3-2 4-4 4 0-2 2-4 4-4zM27 27c-3 2-3 6 1 8-1 3-3 7-6 7-1 0-2-1-3-1s-2 1-3 1c-7-2-11-17 0-18 2 0 2 1 4 1s6-2 7 2z" fill="#fff"/><text x="29" y="42" class="tv">tv</text></svg>
    <svg viewBox="0 0 64 64"><rect width="64" height="64" rx="15" fill="#fff"/><path d="M13 22l22 29H17q-4 0-4-4zM26 13h21q4 0 4 4v26z" fill="#e9475b"/></svg>
    <svg viewBox="0 0 64 64"><defs><linearGradient id="gk" x2="0" y2="1"><stop offset="0" stop-color="#58bbf9"/><stop offset="1" stop-color="#2e62e6"/></linearGradient></defs><rect width="64" height="64" rx="15" fill="url(#gk)"/><path d="M16 9h32l3 19H13z" fill="#f6f6f6"/><path d="M18 25h28" stroke="#a9b6c4" stroke-width="2"/><circle cx="32" cy="17" r="6" fill="#6cbf5a"/><path d="M32 17v-6a6 6 0 0 0-6 6z" fill="#9d58c8"/><path d="M32 17v-6a6 6 0 0 1 6 6z" fill="#f19a37"/><path d="M32 28v26M22 54.500h20" stroke="#dfe5ec" stroke-width="3"/></svg>
    <svg viewBox="0 0 64 64"><rect width="64" height="64" rx="15" fill="#6edb4e"/><g fill="#f6fbf4"><rect x="12" y="42" width="8" height="13" rx="1.500"/><rect x="23" y="30" width="8" height="25" rx="1.500"/><rect x="34" y="9" width="8" height="46" rx="1.500"/><rect x="45" y="21" width="8" height="34" rx="1.500"/></g></svg>
    <svg viewBox="0 0 64 64"><rect width="64" height="64" rx="15" fill="#f09a3c"/><path d="M11 54h43" stroke="#f9d3a6" stroke-width="2.500"/><path d="M50 13c3-2 5 2 3 5L22 49l-11 5 4-11z" fill="#fbf7f2"/><path d="M32 32l4 5" stroke="#888" stroke-width="1.500"/></svg>
    <svg viewBox="0 0 64 64"><rect width="64" height="64" rx="15" fill="url(#gk)"/><path d="M37 14L17 49M29 14l20 35M12 39h42" stroke="#fff" stroke-width="5" stroke-linecap="round"/></svg>
    <svg viewBox="0 0 64 64"><rect width="64" height="64" rx="15" fill="#b6b9bb"/><circle cx="32" cy="32" r="25" fill="#4a4c4e" stroke="#2d2e2f" stroke-width="3" stroke-dasharray="2 1.500"/><circle cx="32" cy="32" r="19" fill="#5b5d5f" stroke="#1f2021" stroke-width="3.500"/><circle cx="32" cy="32" r="6" fill="#333"/><path d="M32 32h20M32 32L22 15M32 32L22 49" stroke="#a6a8aa" stroke-width="2.600"/></svg>
    <svg viewBox="0 0 64 64"><rect width="64" height="64" rx="15" fill="#fff"/><use href="#edge"/></svg>
    <svg class="oak" viewBox="0 0 80 68"><ellipse cx="40" cy="34" rx="39" ry="33.500" fill="#f8f8f6" stroke="#c9c9c4"/><path d="M40 11c5 0 8 4 8 8 8-1 13 5 11 11 8 2 10 8 8 12 8 5 7 14-2 17-7 6-15 9-25 9s-18-3-25-9c-9-3-10-12-2-17-2-4 0-10 8-12-2-6 3-12 11-11 0-4 3-8 8-8z" fill="#aecb6b"/><path d="M40 28v40M40 48l14-9M40 48l-14-9M40 62l18-13M40 62L22 49" fill="none" stroke="#eef5d6" stroke-width="2"/></svg>
    <i class="bar"></i>
    <svg viewBox="0 0 64 64"><use href="#word"/></svg>
    <svg viewBox="0 0 64 64"><rect width="64" height="64" rx="15" fill="#fff"/><rect x="17" y="11" width="37" height="43" rx="3" fill="#3a9b5e"/><path d="M36 11h18v11H36z" fill="#5fc088"/><path d="M36 22h18v10H36z" fill="#45a468"/><path d="M17 32h37v19a3 3 0 0 1-3 3H20a3 3 0 0 1-3-3z" fill="#2b6a3e"/><path d="M36 32h18v11H36z" fill="#347f4c"/><rect x="6" y="20" width="24" height="24" rx="3" fill="#2c7442"/><text x="18" y="38.500" text-anchor="middle" class="app-letter">X</text></svg>
    <svg viewBox="0 0 64 64"><rect width="64" height="64" rx="15" fill="#fff"/><path d="M42 10l12 5v34l-12 5z" fill="#4a9be8"/><path d="M9 22l4-3 30 24v11L9 27z" fill="#2a69ad"/><path d="M9 42l4 4 30-24V10L9 39z" fill="#3579c4"/></svg>
    <i class="bar"></i>
    <svg class="papers" viewBox="0 0 60 78"><path d="M0 18h58v40H0z" fill="#ddd"/><path d="M10 2h24l14 12v20H10z" fill="#f0f0f0"/><path d="M5 11h32l3 17h15v48H5z" fill="#ececec"/><path d="M30 2q8 14 9 27l16-1q-4-16-25-26z" fill="#fff" stroke="#bbb"/><path d="M8 34h45M8 48h45M8 68h45" stroke="#c8c8c8"/><path d="M5 11v65" stroke="#222" stroke-width="2"/></svg>
    <svg class="thumb" viewBox="0 0 76 60"><path d="M0 6h76v36H0z" fill="#232423"/><path d="M0 6h76v5H0z" fill="#333"/><path d="M15 16h58M15 26h58M15 36h34" stroke="#f1f1f1" stroke-width="5" stroke-dasharray="4.500 4.400"/><use href="#finder" x="50" y="36" width="24" height="24"/></svg>
    <svg class="thumb" viewBox="0 0 76 60"><path d="M0 6h76v36H0z" fill="#242526"/><path d="M0 6h14v36H0zM0 6h76v5H0z" fill="#393b3c"/><path d="M17 15h56M17 25h56M17 29h56M17 33h56M17 37h56" stroke="#4d4e50" stroke-width="1.500"/><path d="M14 19.500h62" stroke="#2b56b8" stroke-width="2"/><use href="#finder" x="50" y="36" width="24" height="24"/></svg>
    <svg class="wdoc" viewBox="0 0 72 76"><path d="M0 0h69v76H0z" fill="#fcfcfc"/><path d="M0 0h69v4H0z" fill="#2c5bb8"/><path d="M0 4h69v13H0z" fill="#eaebec"/><path d="M4 10h56" stroke="#7f9ac0" stroke-width="3" stroke-dasharray="3 5"/><circle cx="57" cy="10" r="2.500" fill="#2fa28c"/><path d="M14 31h10M14 37h9M14 43h13M14 48h11M44 54h3M22 60h27M14 65h34M14 70h34" stroke="#555" stroke-width="1.300"/><path d="M0 74.500h69" stroke="#bbb" stroke-width="2"/><use href="#word" x="47" y="52" width="24" height="22"/></svg>
    <svg class="wdoc" viewBox="0 0 72 76"><path d="M0 0h69v76H0z" fill="#fcfcfc"/><path d="M0 0h69v4H0z" fill="#2c5bb8"/><path d="M0 4h69v13H0z" fill="#eaebec"/><path d="M4 10h56" stroke="#7f9ac0" stroke-width="3" stroke-dasharray="3 5"/><circle cx="57" cy="10" r="2.500" fill="#2fa28c"/><path d="M14 31h10M14 37h9M14 43h13M14 48h11M44 54h3M22 60h27M14 65h34M14 70h34" stroke="#555" stroke-width="1.300"/><path d="M0 74.500h69" stroke="#bbb" stroke-width="2"/><use href="#word" x="47" y="52" width="24" height="22"/></svg>
    <svg class="web" viewBox="0 0 76 70"><path d="M0 0h76v68H0z" fill="#fbfbfb"/><path d="M0 0h76v9H0z" fill="#3a3a3c"/><path d="M10 2.500h55" stroke="#d96a4e" stroke-width="2.500" stroke-dasharray="7 2"/><path d="M0 18h17v50H0z" fill="#7a6794"/><path d="M0 27h17M0 42h17M0 54h17" stroke="#fff" stroke-width="1.500"/><path d="M20 14h44M20 18h14M24 24h36M24 36h28M20 58h26M20 63h26" stroke="#888" stroke-width="1.300"/><path d="M36 27h17" stroke="#e89232" stroke-width="3"/><path d="M31 47h21" stroke="#a33a2a" stroke-width="5" stroke-dasharray="4 2"/><rect x="50" y="48" width="24" height="22" rx="5" fill="#fff"/><use href="#edge" x="51" y="48" width="22" height="22"/></svg>
    <svg class="trash" viewBox="0 0 58 72"><path d="M1 6l7 60c4 6 38 6 42 0l7-60z" fill="#6d777c" opacity=".75"/><ellipse cx="29" cy="8" rx="28" ry="7" fill="#4e5a60" stroke="#9aa4a8" stroke-width="1.500"/><path d="M10 15l6 50M48 15l-6 50" stroke="#8f999d" stroke-width="2" opacity=".6"/></svg>
  </div>
  <div class="dots"><i></i><i></i><i></i><i></i></div>
</footer>
</body>
</html>
```
FILE: styles.css
```css
* { box-sizing: border-box; }
body { margin: 0; width: 2880px; height: 1800px; overflow: hidden; background: linear-gradient(90deg, #5b9bd8, #8fbce4) top / 100% 100px no-repeat #03101a; font-family: Inter, "Liberation Sans", sans-serif; font-size: 21px; color: #fff; }
.defs { display: block; position: absolute; }
svg { display: block; flex: none; overflow: visible; }
button { font: inherit; color: inherit; border: 0; }
i { font-style: normal; }
.chev { width: 14px; height: 10px; }

/* macOS menu bar */
.menubar { height: 48px; display: grid; grid-template-columns: 68px 110px 84px 88px 98px 111px 127px 106px 98px 138px 960px 84px 70px 64px 88px 74px 63px 63px 60px 1fr; align-items: center; padding: 0 0 2px 39px; background: linear-gradient(90deg, #a5d0f6, #aed6fa 45%, #c0e1fc); color: #1b2632; font-size: 25px; letter-spacing: -.2px; white-space: nowrap; }
.menubar b { font-weight: 700; letter-spacing: -.1px; }
.clock { letter-spacing: .4px; }
.siri { width: 28px; height: 28px; border-radius: 50%; background: radial-gradient(circle, #fff 0 12%, transparent 40%), conic-gradient(#3f6a78, #4cb08a, #3b9fe0, #5a6fd6, #7c3d9c, #e24578, #6b3d5e, #3f6a78); }

/* window */
.window { position: relative; height: 1634px; margin-top: 2px; border-radius: 20px; overflow: hidden; background: #2d2d2d; display: flex; flex-direction: column; box-shadow: 0 0 0 1px #000; }
.window::after { content: ""; position: absolute; inset: 0; border-radius: 20px; box-shadow: inset 0 0 0 2px rgba(255, 255, 255, .28); }
.titlebar { height: 64px; flex: none; background: #373737; display: grid; grid-template-columns: 40px 40px 78px 113px 104px 54px 54px 54px 44px 32px 55px 418px 38px 345px 255px 1006px 66px 1fr; align-items: center; padding-left: 26px; white-space: nowrap; }
.titlebar svg { fill: none; stroke: #fff; stroke-width: 2.2; }
.titlebar .chev { color: #8c8c8c; stroke: none; }
.titlebar .dim { stroke: #777; color: #777; }
.light { width: 25px; height: 25px; border-radius: 50%; }
.red { background: #ed6b60; } .amber { background: #f5bf4f; } .green { background: #62c554; }
.autosave { font-weight: 600; font-size: 22px; letter-spacing: -.3px; color: #dcdcdc; }
.toggle { width: 79px; height: 28px; border-radius: 14px; background: #1f1f1f; display: flex; align-items: center; gap: 6px; font-size: 16px; font-weight: 600; color: #cfcfcf; letter-spacing: 0; }
.toggle i { width: 25px; height: 25px; border-radius: 50%; background: #fff; }
.tiny-x { font: 700 12px Inter, sans-serif; fill: #fff; stroke: none; }
.doc { font-weight: 700; font-size: 26px; letter-spacing: .3px; padding-left: 2px; }
.saved { font-weight: 700; font-size: 26px; color: #969696; letter-spacing: -.2px; padding-left: 2px; }
.saved + .chev { margin-left: 2px; }

/* ribbon */
.ribbon { height: 210px; border-bottom: 2px solid #000; background: #2d2d2d; flex: none; }
.tabs { height: 58px; padding-left: 22px; display: grid; grid-template-columns: 122px 123px 112px 204px 165px 104px 137px 111px 227px 40px 1148px 153px 191px; align-items: center; font-size: 25px; font-weight: 600; letter-spacing: -.2px; color: #e2e2e2; white-space: nowrap; }
.tabs .active { width: 76px; height: 54px; line-height: 54px; letter-spacing: -.1px; background: linear-gradient(#e2e2e2, #e2e2e2) bottom / 100% 6px no-repeat; border-radius: 3px; font-weight: 700; }
.pill { height: 48px; margin-top: 6px; padding: 0 0 0 17px; background: #616161; border-radius: 7px; display: flex; align-items: center; gap: 9px; font-size: 24px; font-weight: 600; letter-spacing: -.4px; white-space: nowrap; }
.share { width: 133px; }
.groups { height: 150px; display: grid; grid-template-columns: 210px 540px 323px 278px 352px 364px 194px 310px 130px 179px; white-space: nowrap; }
.group { background: linear-gradient(#555, #555) right 10px / 2px 124px no-repeat; padding-top: 16px; display: grid; align-content: start; font-weight: 500; font-size: 21.5px; letter-spacing: -.35px; }
.g-sens { background: none; }
.big { text-align: center; line-height: 24px; }
.pic { height: 64px; margin-bottom: 9px; display: flex; align-items: center; gap: 12px; }
.off { color: #8f8f8f; }
.stack { display: grid; grid-template-rows: 44px 44px 44px; margin-top: -6px; }
.stack div { display: flex; align-items: center; gap: 12px; }
.g-clip { grid-template-columns: 92px 1fr; column-gap: 9px; padding-left: 24px; }
.g-clip .stack div { gap: 9px; }
.paste { letter-spacing: -.6px; }
.paste .pic { padding-left: 9px; gap: 8px; margin-right: -8px; }
.paste .chev, .sens .chev { color: #777; }
.two { padding-top: 20px; grid-template-rows: 48px 48px; row-gap: 16px; }
.line { display: grid; align-items: center; }
.combo { height: 48px; padding: 0 8px 2px 13px; background: #393939; border: 1px solid #474747; border-bottom: 2px solid #616161; border-radius: 7px; display: flex; align-items: center; justify-content: space-between; font-size: 24px; font-weight: 500; letter-spacing: -.4px; }
.sep { width: 2px; height: 36px; background: #555; }
.g-font .line { padding-left: 20px; }
.g-font .line:first-child { grid-template-columns: 281px 108px 43px 40px; column-gap: 5px; }
.grow { margin: -9px 0 0 7px; }
.shrink { margin: -9px 0 0 14px; }
.g-font .line:last-child { padding-left: 36px; grid-template-columns: 52px 50px 42px 34px 25px 45px 35px 25px 45px 31px 45px 1fr; }
.fmt { font-size: 25px; color: #dcdcdc; }
b.fmt { font-weight: 800; }
.it { font-family: "Liberation Serif", serif; font-style: italic; font-size: 28px; padding-left: 3px; }
.un { text-underline-offset: 4px; font-weight: 400; }
.g-align svg { fill: none; stroke: #e0e0e0; stroke-width: 2.4; }
.g-align .chev { stroke: none; margin-left: -7px; }
.g-align .line { padding-left: 30px; grid-template-columns: 52px 42px 64px 28px 52px 1fr; }
.sel { width: 48px; height: 48px; padding-left: 10px; border-radius: 7px; background: #565656; display: grid; align-items: center; }
.plain { background: none; }
.ab { font: 20px Inter, sans-serif; letter-spacing: -.5px; fill: #dcdcdc; stroke: none; }
.g-wrap .line { padding-left: 26px; display: flex; gap: 0; }
.g-wrap span { padding-left: 13px; padding-right: 10px; font-size: 22px; letter-spacing: -.45px; }
.g-num .line { padding-left: 20px; }
.g-num .line:last-child { padding-left: 33px; grid-template-columns: 40px 31px 61px 48px 25px 51px 1fr; }
.g-num .combo { width: 310px; }
.sym { font-size: 31px; font-weight: 300; color: #e0e0e0; }
.pc { font-size: 36px; letter-spacing: -1px; margin-left: -1px; }
.dec { font: 18px "Open Sans", sans-serif; fill: #dcdcdc; }
.g-style { grid-template-columns: 116px 111px 88px; padding-left: 22px; }
.cf .pic { padding-left: 17px; }
.ft .pic { padding-left: 16px; gap: 10px; }
.cs .pic { padding-left: 6px; gap: 10px; }
.g-cells { padding-top: 10px; padding-left: 27px; grid-template-rows: 44px 44px 44px; }
.row3 { display: flex; align-items: center; gap: 12px; font-size: 22px; letter-spacing: -.3px; }
.g-edit { grid-template-columns: 63px 103px 100px; padding-left: 27px; }
.g-edit .stack div { gap: 11px; }
.sort .pic { padding-left: 10px; }
.find { margin-left: -5px; margin-right: 5px; }
.find .pic { padding-left: 8px; }
.g-an .pic { padding-left: 33px; }
.g-sens .big { width: 154px; }
.g-sens .pic { padding-left: 43px; gap: 8px; }

/* formula bar */
.formula { height: 52px; flex: none; background: #262626; display: grid; grid-template-columns: 170px 30px 58px 60px 42px 2489px 9px 14px; align-items: center; }
.name { height: 44px; background: #282828; border-right: 2px solid #1d1d1d; display: flex; align-items: center; justify-content: space-between; padding: 0 8px 3px 20px; font: 24.500px "Open Sans", sans-serif; letter-spacing: -.3px; color: #e4e4e4; }
.formula > svg:nth-child(2) { grid-column: 3; }
.fx { font: italic 34px "Liberation Serif", serif; color: #a5a5a5; margin-top: -6px; }
.field { height: 38px; background: #383838; margin-left: 1px; }
.formula > svg:last-child { grid-column: 8; }

/* sheet */
.sheet { height: 1210px; flex: none; border-top: 6px solid #e9e9e9; color: #fff; font: 700 22px Lato, "Liberation Sans", sans-serif; overflow: hidden; }
.cols { height: 44px; display: grid; grid-template-columns: 44px repeat(22, 128px) 20px; background: #161616; border-bottom: 2px solid #bababa; }
.cols span { display: grid; place-items: center; border-left: 2px solid #5c5c5c; padding-top: 1px; }
.cols .corner { border: 0; background: linear-gradient(to bottom right, transparent 50%, #5d5d5d 50%) 10px 8px / 30px 30px no-repeat; }
.cols .corner + span { border-color: #c6c6c6; }
.cols .hot { background: #595959; box-shadow: inset 0 -3px #3b754b; margin-bottom: -2px; z-index: 1; }
.body { display: grid; grid-template-columns: 46px 1fr; }
.rows { background: #161616; border-right: 2px solid #bababa; border-left: 1px solid #555; height: 1160px; overflow: hidden; letter-spacing: -.5px; }
.rows span { display: grid; place-items: center; height: 32px; border-bottom: 2px solid #5c5c5c; padding-top: 1px; }
.rows .hot { background: #595959; box-shadow: 2px 0 #3b754b; }
.cells { position: relative; height: 1160px; background: linear-gradient(90deg, #d4d4d4 2px, transparent 2px) -2px 0 / 128px 100%, linear-gradient(#d4d4d4 2px, transparent 2px) 0 30px / 100% 32px, #fff; }
.chart { position: absolute; left: -1px; top: 42px; overflow: hidden; }
.cursor { position: absolute; left: 1660px; top: 412px; width: 134px; height: 38px; border: 4px solid #3b754b; }
.cursor i { position: absolute; right: -8px; bottom: -8px; width: 14px; height: 14px; background: #3b754b; border: 2px solid #fff; }
.ctitle { font: 24.500px Lato, sans-serif; fill: #595959; }
.ax { font: 15.700px Lato, sans-serif; fill: #595959; }

/* sheet tabs */
.sheetbar { height: 52px; flex: none; background: #323232; border-top: 2px solid #686868; border-bottom: 2px solid #111; display: grid; grid-template-columns: 120px 160px 156px 78px; font-size: 24px; letter-spacing: -.2px; }
.nav { display: grid; align-items: center; padding-left: 30px; border-right: 1px solid #666; }
.tab { background: #202020; color: #8a8a8a; display: grid; place-items: center; }
.on { height: 45px; margin-top: -2px; padding-top: 5px; background: #fff; color: #3f7f50; font-weight: 700; border-radius: 0 0 6px 6px; letter-spacing: -.4px; }
.add { height: 41px; display: grid; place-items: center; border-right: 2px solid #666; padding: 7px 0 0 4px; }

/* status bar */
.status { height: 46px; flex: none; background: linear-gradient(#484848, #383838); display: grid; grid-template-columns: 108px 38px 2047px 232px 30px 214px 56px 1fr; align-items: center; padding-left: 49px; font-size: 24px; letter-spacing: -.3px; color: #eee; white-space: nowrap; }
.acc { letter-spacing: -.05px; }
.views { display: grid; grid-template-columns: 74px 70px 72px; height: 46px; }
.views b { display: grid; place-items: center; }
.views b:first-child { background: #5c5c5c; }
.views svg { fill: none; stroke: #f2f2f2; stroke-width: 2.6; }
.slider { width: 200px; height: 8px; border-radius: 4px; background: #6c6c6c; display: flex; align-items: center; padding-left: 83px; }
.slider i { width: 32px; height: 32px; border-radius: 50%; background: #9b9b9b; }

/* desktop and dock */
.desk { position: relative; height: 116px; padding: 4px 66px 0; overflow: hidden; }
.rock { position: absolute; left: 0; top: 0; z-index: -1; opacity: .6; -webkit-mask-image: linear-gradient(90deg, rgba(0,0,0,.25), #000 50%); mask-image: linear-gradient(90deg, rgba(0,0,0,.25), #000 50%); }
.dock { height: 102px; width: 2748px; border-radius: 26px; border: 2px solid #44535b; background: linear-gradient(90deg, #13202a, #16252e 35%, #2d3b43 60%, #2b3b43); display: grid; grid-template-columns: repeat(20, 83.200px) 74px 101px 29px 82px 84px 93px 29px 76px 82px 87px 85px 78px 93px 58px; align-items: start; padding: 14px 0 0 14px; }
.dock svg { width: 64px; height: 64px; }
.dock .oak { width: 80px; height: 68px; margin-top: -1px; }
.bar { width: 2px; height: 74px; background: #5d6c74; margin-top: -2px; }
.dock .papers { width: 60px; height: 78px; margin-top: -8px; }
.dock .thumb { width: 76px; height: 60px; margin-top: 8px; }
.dock .wdoc { width: 72px; height: 76px; margin-top: -6px; }
.dock .web { width: 76px; height: 70px; margin-top: -2px; }
.dock .trash { width: 58px; height: 72px; margin-top: -3px; }
.dots { display: grid; grid-template-columns: 1664px 204px 82px 8px; padding-left: 44px; margin-top: -12px; position: relative; }
.dots i { width: 8px; height: 8px; border-radius: 50%; background: #9fadb5; }
.app-letter { font: 700 19px Inter, sans-serif; fill: #fff; }
.nov { font: 700 12px Inter, sans-serif; fill: #fff; }
.nine { font: 300 38px Inter, sans-serif; fill: #222; }
.tv { font: 500 26px Inter, sans-serif; fill: #fff; letter-spacing: -1px; }
```
